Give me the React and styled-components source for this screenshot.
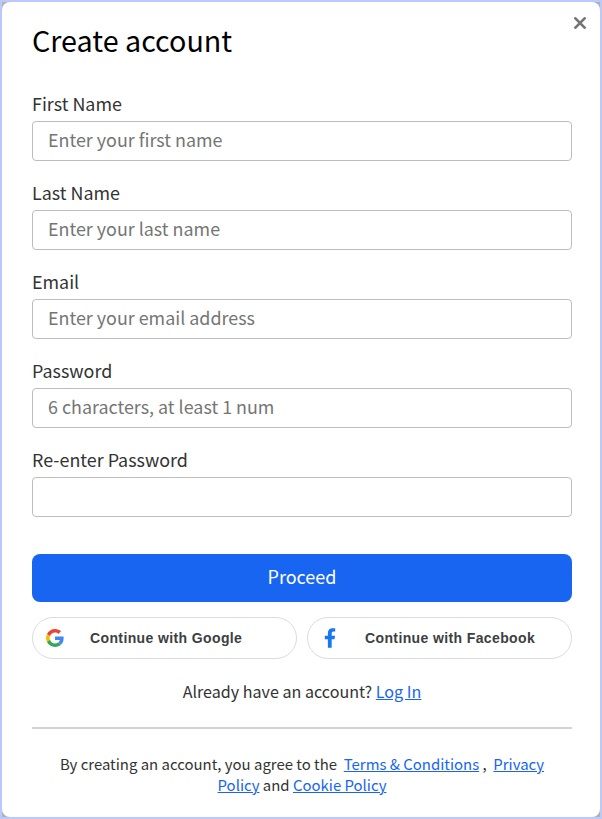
import React from "react";
import styled, { createGlobalStyle } from "styled-components";

const fields = [
  { id: "firstName", label: "First Name", type: "text", hint: "Enter your first name" },
  { id: "lastName", label: "Last Name", type: "text", hint: "Enter your last name" },
  { id: "email", label: "Email", type: "email", hint: "Enter your email address" },
  { id: "password", label: "Password", type: "password", hint: "6 characters, at least 1 num" },
  { id: "confirm", label: "Re-enter Password", type: "password", hint: "" },
];

const GoogleLogo = () => (
  <svg width="18" height="18" viewBox="0 0 48 48" aria-hidden="true">
    <path
      fill="#EA4335"
      d="M24 9.5c3.54 0 6.71 1.22 9.21 3.6l6.85-6.85C35.9 2.38 30.47 0 24 0 14.62 0 6.51 5.38 2.56 13.22l7.98 6.19C12.43 13.72 17.74 9.5 24 9.5z"
    />
    <path
      fill="#4285F4"
      d="M46.98 24.55c0-1.57-.15-3.09-.38-4.55H24v9.02h12.94c-.58 2.96-2.26 5.48-4.78 7.18l7.73 6c4.51-4.18 7.09-10.36 7.09-17.65z"
    />
    <path
      fill="#FBBC05"
      d="M10.53 28.59c-.48-1.45-.76-2.99-.76-4.59s.27-3.14.76-4.59l-7.98-6.19C.92 16.46 0 20.12 0 24c0 3.88.92 7.54 2.56 10.78l7.97-6.19z"
    />
    <path
      fill="#34A853"
      d="M24 48c6.48 0 11.93-2.13 15.89-5.81l-7.73-6c-2.15 1.45-4.92 2.3-8.16 2.3-6.26 0-11.57-4.22-13.47-9.91l-7.98 6.19C6.51 42.62 14.62 48 24 48z"
    />
  </svg>
);

const FacebookLogo = () => (
  <svg width="18" height="20" viewBox="-77 0 474 512" aria-hidden="true">
    <path
      fill="#1877F2"
      d="M279.14 288l14.22-92.66h-88.91v-60.13c0-25.35 12.42-50.06 52.24-50.06h40.42V6.26S260.43 0 225.36 0c-73.22 0-121.08 44.38-121.08 124.72v70.62H22.89V288h81.39v224h100.17V288z"
    />
  </svg>
);

const App = () => {
  return (
    <>
      <GlobalStyle />
      <Dialog>
        <Close type="button" aria-label="Close">
          <svg width="12" height="12" viewBox="0 0 12 12">
            <path d="M1.4 1.4 10.6 10.6M10.6 1.4 1.4 10.6" stroke="#757575" strokeWidth="2.7" strokeLinecap="round" />
          </svg>
        </Close>
        <Title>Create account</Title>
        <Form onSubmit={(e) => e.preventDefault()}>
          {fields.map((field) => (
            <Field key={field.id}>
              <Label htmlFor={field.id}>{field.label}</Label>
              <Input id={field.id} type={field.type} placeholder={field.hint} />
            </Field>
          ))}
          <Proceed type="submit">Proceed</Proceed>
        </Form>
        <Socials>
          <Social type="button">
            <IconSlot>
              <GoogleLogo />
            </IconSlot>
            <span>Continue with Google</span>
          </Social>
          <Social type="button">
            <IconSlot>
              <FacebookLogo />
            </IconSlot>
            <span>Continue with Facebook</span>
          </Social>
        </Socials>
        <Login>
          Already have an account? <Anchor href="#login">Log In</Anchor>
        </Login>
        <Divider />
        <Legal>
          By creating an account, you agree to the &nbsp;<Anchor href="#terms">Terms &amp; Conditions</Anchor> , &nbsp;
          <Anchor href="#privacy">Privacy Policy</Anchor> and <Anchor href="#cookies">Cookie Policy</Anchor>
        </Legal>
      </Dialog>
    </>
  );
};

const GlobalStyle = createGlobalStyle`
  * {
    box-sizing: border-box;
    margin: 0;
    padding: 0;
  }

  body {
    background: #b2b2b2;
    border: 2px solid #bbc8fe;
    height: 100vh;
    overflow: hidden;
    color: #333333;
    font-family: "Noto Sans CJK SC", "Noto Sans", sans-serif;
  }
`;

const Dialog = styled.div`
  position: relative;
  height: 815px;
  padding: 18px 28px 0 30px;
  background: #ffffff;
  border-radius: 8px;
`;

const Close = styled.button`
  position: absolute;
  top: 15px;
  right: 14px;
  display: flex;
  background: none;
  border: none;
`;

const Title = styled.h1`
  color: #000000;
  font-size: 28.7px;
  font-weight: 400;
  line-height: 40px;
`;

const Form = styled.form`
  display: flex;
  flex-direction: column;
  gap: 17px;
  padding-top: 29px;
`;

const Field = styled.div`
  display: flex;
  flex-direction: column;
`;

const Label = styled.label`
  padding-bottom: 3px;
  font-size: 17.9px;
  line-height: 29px;
`;

const Input = styled.input`
  height: 40px;
  padding: 0 15px 4px;
  border: 1px solid #bdbdbd;
  border-radius: 4px;
  background: #ffffff;
  font-family: inherit;
  font-size: 17.9px;

  &::placeholder {
    color: #757575;
  }
`;

const Proceed = styled.button`
  height: 48px;
  margin-top: 20px;
  padding-bottom: 4px;
  border: none;
  border-radius: 8px;
  background: #1865f2;
  color: #ffffff;
  font-family: inherit;
  font-size: 18px;
`;

const Socials = styled.div`
  display: grid;
  grid-template-columns: 1fr 1fr;
  gap: 10px;
  margin-top: 15px;
`;

const Social = styled.button`
  display: flex;
  align-items: center;
  height: 42px;
  padding-left: 13px;
  border: 1px solid #dadce0;
  border-radius: 21px;
  background: #ffffff;
  color: #3c4043;
  font-family: "Liberation Sans", Arial, sans-serif;
  font-size: 14px;
  font-weight: 700;
  letter-spacing: 0.38px;
`;

const IconSlot = styled.i`
  display: flex;
  width: 44px;
`;

const Login = styled.p`
  margin-top: 21px;
  font-size: 16.1px;
  line-height: 22px;
  text-align: center;
`;

const Anchor = styled.a`
  color: #1865f2;
  text-decoration: underline;
`;

const Divider = styled.hr`
  margin-top: 25px;
  border: none;
  border-top: 2px solid #d2d2d2;
`;

const Legal = styled.p`
  margin-top: 24px;
  padding: 0 20px;
  font-size: 14.93px;
  line-height: 21px;
  text-align: center;
`;

export default App;
